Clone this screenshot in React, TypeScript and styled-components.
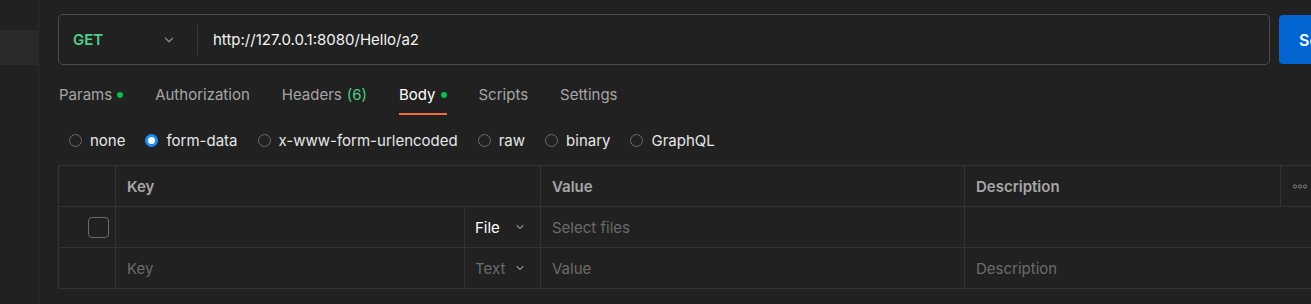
import React from 'react'
import styled, {createGlobalStyle} from 'styled-components'

const GlobalStyle = createGlobalStyle`
  html, body {
    margin: 0;
    padding: 0;
    background: #212121;
    font-family: Inter, "Noto Sans", sans-serif;
    font-size: 15px;
    color: #a6a6a6;
  }
`

const Chevron = ({size = 12, color = '#8c8c8c'}: {size?: number, color?: string}) => (
    <svg width={size} height={size} viewBox="0 0 12 12" fill="none">
        <path d="M3 4.5 L6 7.5 L9 4.5" stroke={color} strokeWidth="1.1" strokeLinecap="round" strokeLinejoin="round"/>
    </svg>
)

const MoreIcon = () => (
    <svg width="14" height="5" viewBox="0 0 14 5" fill="none">
        <circle cx="2" cy="2.5" r="1.6" stroke="#8c8c8c" strokeWidth="0.9"/>
        <circle cx="7" cy="2.5" r="1.6" stroke="#8c8c8c" strokeWidth="0.9"/>
        <circle cx="12" cy="2.5" r="1.6" stroke="#8c8c8c" strokeWidth="0.9"/>
    </svg>
)

const tabs = [
    {label: 'Params', dot: true},
    {label: 'Authorization'},
    {label: 'Headers', count: 6},
    {label: 'Body', dot: true, active: true},
    {label: 'Scripts'},
    {label: 'Settings'},
]

const bodyTypes = ['none', 'form-data', 'x-www-form-urlencoded', 'raw', 'binary', 'GraphQL']

function App() {
    return (
        <>
            <GlobalStyle/>
            <Layout>
                <Sidebar>
                    <SideItem/>
                </Sidebar>
                <Main>
                    <RequestRow>
                        <UrlBar>
                            <MethodSelect>
                                <Method>GET</Method>
                                <Chevron size={14}/>
                            </MethodSelect>
                            <Divider/>
                            <UrlText>http://127.0.0.1:8080/Hello/a2</UrlText>
                        </UrlBar>
                        <SendButton>Send</SendButton>
                    </RequestRow>

                    <Tabs>
                        {tabs.map(t => (
                            <Tab key={t.label} $active={!!t.active}>
                                {t.label}
                                {t.count !== undefined && <Count>({t.count})</Count>}
                                {t.dot && <Dot/>}
                            </Tab>
                        ))}
                    </Tabs>

                    <RadioRow>
                        {bodyTypes.map(b => (
                            <RadioItem key={b}>
                                <Radio $checked={b === 'form-data'}/>
                                {b}
                            </RadioItem>
                        ))}
                    </RadioRow>

                    <Table>
                        <Cell/>
                        <HeadCell $span={2}>Key</HeadCell>
                        <HeadCell>Value</HeadCell>
                        <HeadCell>Description</HeadCell>
                        <HeadCell $center><MoreIcon/></HeadCell>

                        <Cell $end><Checkbox/></Cell>
                        <Cell/>
                        <TypeCell $light>File<Chevron/></TypeCell>
                        <Cell $muted>Select files</Cell>
                        <Cell $span={2}/>

                        <Cell/>
                        <Cell $muted>Key</Cell>
                        <TypeCell>Text<Chevron/></TypeCell>
                        <Cell $muted>Value</Cell>
                        <Cell $span={2} $muted>Description</Cell>
                    </Table>
                </Main>
            </Layout>
        </>
    )
}

const Layout = styled.div`
  display: flex;
  height: 304px;
  overflow: hidden;
`

const Sidebar = styled.div`
  flex: 0 0 39px;
  border-right: 1px solid #2c2c2c;
  padding-top: 30px;
  box-sizing: border-box;
`

const SideItem = styled.div`
  height: 35px;
  background: #2a2a2a;
`

const Main = styled.div`
  flex: 1;
  min-width: 0;
  overflow: hidden;
  padding: 14px 0 0 19px;
`

const RequestRow = styled.div`
  display: flex;
  gap: 9px;
  align-items: center;
`

const UrlBar = styled.div`
  flex: 0 0 1212px;
  height: 51px;
  box-sizing: border-box;
  border: 1px solid #4d4d4d;
  border-radius: 5px;
  display: flex;
  align-items: center;
`

const MethodSelect = styled.div`
  width: 138px;
  box-sizing: border-box;
  padding: 0 21px 0 14px;
  display: flex;
  align-items: center;
  justify-content: space-between;
`

const Method = styled.span`
  color: #50cf8a;
  font-weight: 600;
`

const Divider = styled.div`
  width: 1px;
  height: 30px;
  background: #3a3a3a;
`

const UrlText = styled.span`
  padding-left: 15px;
  color: #f2f2f2;
`

const SendButton = styled.div`
  flex: 0 0 100px;
  height: 49px;
  border-radius: 4px;
  background: #0265d2;
  color: #fff;
  font-weight: 600;
  font-size: 16px;
  display: flex;
  align-items: center;
  padding-left: 20px;
  box-sizing: border-box;
`

const Tabs = styled.div`
  display: flex;
  gap: 32px;
  margin-top: 11px;
  padding-left: 1px;
`

const Tab = styled.div<{ $active: boolean }>`
  height: 39px;
  box-sizing: border-box;
  display: flex;
  align-items: center;
  gap: 5px;
  border-bottom: 2px solid ${p => p.$active ? '#f26b3a' : 'transparent'};
  color: ${p => p.$active ? '#ffffff' : '#a6a6a6'};
`

const Count = styled.span`
  color: #4fc97f;
`

const Dot = styled.span`
  width: 6px;
  height: 6px;
  border-radius: 50%;
  background: #0cbb52;
`

const RadioRow = styled.div`
  display: flex;
  align-items: center;
  gap: 20px;
  height: 50px;
  padding-left: 11px;
`

const RadioItem = styled.label`
  display: flex;
  align-items: center;
  gap: 8px;
  color: #e6e6e6;
`

const Radio = styled.span<{ $checked: boolean }>`
  width: 13px;
  height: 13px;
  box-sizing: border-box;
  border-radius: 50%;
  border: ${p => p.$checked ? '3.5px solid #1c8cf5' : '1px solid #6b6b6b'};
  background: ${p => p.$checked ? '#ffffff' : 'transparent'};
`

const Table = styled.div`
  display: grid;
  grid-template-columns: 57px 349px 76px 424px 316px 40px;
  grid-auto-rows: 41px;
  border-top: 1px solid #333;
  border-left: 1px solid #333;
  width: max-content;
`

const Cell = styled.div<{ $span?: number, $muted?: boolean, $end?: boolean }>`
  grid-column: span ${p => p.$span ?? 1};
  box-sizing: border-box;
  border-right: 1px solid #333;
  border-bottom: 1px solid #333;
  display: flex;
  align-items: center;
  justify-content: ${p => p.$end ? 'flex-end' : 'flex-start'};
  padding: ${p => p.$end ? '0 6px 0 0' : '0 0 0 11px'};
  color: ${p => p.$muted ? '#6b6b6b' : '#a6a6a6'};
`

const HeadCell = styled(Cell)<{ $center?: boolean }>`
  font-weight: 600;
  color: #a6a6a6;
  ${p => p.$center && 'padding: 0 0 0 12px;'}
`

const TypeCell = styled(Cell)<{ $light?: boolean }>`
  padding: 0 14px 0 10px;
  justify-content: space-between;
  color: ${p => p.$light ? '#ffffff' : '#6b6b6b'};
`

const Checkbox = styled.span`
  width: 21px;
  height: 21px;
  box-sizing: border-box;
  border: 1px solid #6b6b6b;
  border-radius: 4px;
`

export default App
